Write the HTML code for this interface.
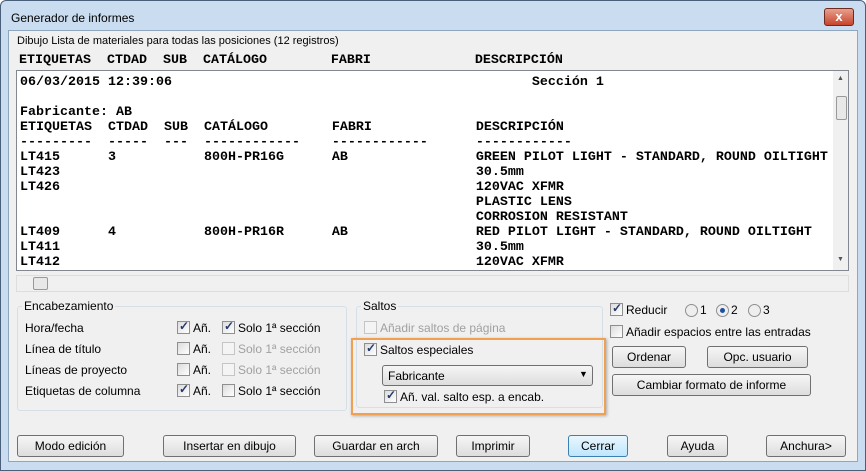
<!DOCTYPE html>
<html><head><style>
*{margin:0;padding:0;box-sizing:border-box}
body{width:866px;height:471px;background:#fff;font-family:"Liberation Sans",sans-serif;font-size:12px;position:relative;overflow:hidden}
.a{position:absolute}
.win{left:0;top:0;width:866px;height:471px;background:#c9dcf0;border:1px solid #4a5f7a;border-radius:6px 6px 0 0}
.client{left:8px;top:30px;width:850px;height:432px;background:#f0f0f0;border:1px solid #8fa6bf}
.mono{font-family:"Liberation Mono",monospace;font-weight:bold;font-size:13.33px;white-space:pre;line-height:15px;color:#000}
.btn{position:absolute;height:22px;border:1px solid #707070;border-radius:3px;background:linear-gradient(#f6f6f6,#dddddd);text-align:center;line-height:20px;font-size:12px}
.cb{position:absolute;width:13px;height:13px;border:1px solid #8e8f8f;background:linear-gradient(135deg,#dcdcdc,#fff)}
.cb.on::after{content:"✓";position:absolute;left:1px;top:-3px;font-size:12px;color:#243a6b;font-weight:bold}
.cb.dis{border-color:#c5c5c5;background:#f4f4f4}
.lbl{position:absolute;font-size:12px;white-space:nowrap}
.gray{color:#a0a0a0}
.grp{position:absolute;border:1px solid #d5dfe5;border-radius:3px}
.rad{position:absolute;width:13px;height:13px;border:1px solid #8e8f8f;border-radius:50%;background:#eee}
</style></head><body>
<div class="a win"></div>
<div class="lbl" style="left:11px;top:11px;font-size:12px">Generador de informes</div>
<div class="a" style="left:824px;top:8px;width:30px;height:18px;background:linear-gradient(#e8a08e,#c7452c);border:1px solid #6d2a1f;border-radius:3px;color:#fff;text-align:center;font-weight:bold;line-height:16px;font-size:13px">x</div>
<div class="a client"></div>
<div class="lbl" style="left:17px;top:35px;font-size:11px">Dibujo Lista de materiales para todas las posiciones (12 registros)</div>
<div class="a mono" style="left:19px;top:53px">ETIQUETAS  CTDAD  SUB  CATÁLOGO        FABRI             DESCRIPCIÓN</div>
<div class="a" style="left:16px;top:70px;width:833px;height:201px;background:#fff;border:1px solid #828790"></div>
<div class="a" style="left:833px;top:71px;width:15px;height:199px;background:#f0f0f0"></div>
<div class="a" style="left:836px;top:96px;width:11px;height:24px;border:1px solid #999;border-radius:2px;background:#e8e8e8"></div>
<div class="lbl" style="left:837px;top:75px;font-size:7px;color:#555">▲</div>
<div class="lbl" style="left:837px;top:256px;font-size:7px;color:#555">▼</div>
<div class="a mono" style="left:20px;top:75px">06/03/2015 12:39:06                                             Sección 1

Fabricante: AB
ETIQUETAS  CTDAD  SUB  CATÁLOGO        FABRI             DESCRIPCIÓN
---------  -----  ---  ------------    ------------      ------------
LT415      3           800H-PR16G      AB                GREEN PILOT LIGHT - STANDARD, ROUND OILTIGHT
LT423                                                    30.5mm
LT426                                                    120VAC XFMR
                                                         PLASTIC LENS
                                                         CORROSION RESISTANT
LT409      4           800H-PR16R      AB                RED PILOT LIGHT - STANDARD, ROUND OILTIGHT
LT411                                                    30.5mm
LT412                                                    120VAC XFMR</div>
<div class="a" style="left:16px;top:275px;width:833px;height:17px;background:#f0f0f0;border:1px solid #ddd"></div>
<div class="a" style="left:33px;top:277px;width:15px;height:13px;border:1px solid #999;border-radius:2px;background:#e8e8e8"></div>

<div class="grp" style="left:17px;top:306px;width:330px;height:105px"></div>
<div class="lbl" style="left:22px;top:299px;background:#f0f0f0;padding:0 2px">Encabezamiento</div>
<div class="lbl" style="left:25px;top:321px">Hora/fecha</div>
<div class="lbl" style="left:25px;top:342px">Línea de título</div>
<div class="lbl" style="left:25px;top:363px">Líneas de proyecto</div>
<div class="lbl" style="left:25px;top:384px">Etiquetas de columna</div>
<div class="cb on" style="left:177px;top:321px"></div><div class="lbl" style="left:193px;top:321px">Añ.</div>
<div class="cb" style="left:177px;top:342px"></div><div class="lbl" style="left:193px;top:342px">Añ.</div>
<div class="cb" style="left:177px;top:363px"></div><div class="lbl" style="left:193px;top:363px">Añ.</div>
<div class="cb on" style="left:177px;top:384px"></div><div class="lbl" style="left:193px;top:384px">Añ.</div>
<div class="cb on" style="left:222px;top:321px"></div><div class="lbl" style="left:238px;top:321px">Solo 1ª sección</div>
<div class="cb dis" style="left:222px;top:342px"></div><div class="lbl gray" style="left:238px;top:342px">Solo 1ª sección</div>
<div class="cb dis" style="left:222px;top:363px"></div><div class="lbl gray" style="left:238px;top:363px">Solo 1ª sección</div>
<div class="cb" style="left:222px;top:384px"></div><div class="lbl" style="left:238px;top:384px">Solo 1ª sección</div>

<div class="grp" style="left:356px;top:306px;width:247px;height:102px"></div>
<div class="lbl" style="left:361px;top:299px;background:#f0f0f0;padding:0 2px">Saltos</div>
<div class="cb dis" style="left:364px;top:321px"></div><div class="lbl gray" style="left:380px;top:321px">Añadir saltos de página</div>
<div class="a" style="left:351px;top:338px;width:255px;height:77px;border:2px solid #f0a050;box-shadow:1px 1px 3px rgba(0,0,0,.3)"></div>
<div class="cb on" style="left:364px;top:343px"></div><div class="lbl" style="left:380px;top:343px">Saltos especiales</div>
<div class="a" style="left:382px;top:365px;width:211px;height:21px;border:1px solid #707070;border-radius:3px;background:linear-gradient(#f6f6f6,#dddddd)"></div>
<div class="lbl" style="left:388px;top:369px">Fabricante</div>
<div class="lbl" style="left:579px;top:369px;font-size:9px">▼</div>
<div class="cb on" style="left:384px;top:390px"></div><div class="lbl" style="left:400px;top:390px">Añ. val. salto esp. a encab.</div>

<div class="cb on" style="left:610px;top:303px"></div><div class="lbl" style="left:626px;top:303px">Reducir</div>
<div class="rad" style="left:685px;top:304px"></div><div class="lbl" style="left:700px;top:303px">1</div>
<div class="rad" style="left:716px;top:304px"></div><div class="a" style="left:720px;top:308px;width:5px;height:5px;border-radius:50%;background:#1e50a0"></div><div class="lbl" style="left:731px;top:303px">2</div>
<div class="rad" style="left:748px;top:304px"></div><div class="lbl" style="left:763px;top:303px">3</div>
<div class="cb" style="left:610px;top:325px"></div><div class="lbl" style="left:626px;top:325px">Añadir espacios entre las entradas</div>
<div class="btn" style="left:612px;top:346px;width:74px">Ordenar</div>
<div class="btn" style="left:707px;top:346px;width:101px">Opc. usuario</div>
<div class="btn" style="left:612px;top:374px;width:199px">Cambiar formato de informe</div>

<div class="btn" style="left:17px;top:435px;width:107px">Modo edición</div>
<div class="btn" style="left:163px;top:435px;width:133px">Insertar en dibujo</div>
<div class="btn" style="left:314px;top:435px;width:124px">Guardar en arch</div>
<div class="btn" style="left:456px;top:435px;width:74px">Imprimir</div>
<div class="btn" style="left:568px;top:435px;width:60px;border-color:#3c7fb1;background:linear-gradient(#eaf6fd,#bee6fd)">Cerrar</div>
<div class="btn" style="left:667px;top:435px;width:61px">Ayuda</div>
<div class="btn" style="left:766px;top:435px;width:80px">Anchura&gt;</div>
</body></html>
